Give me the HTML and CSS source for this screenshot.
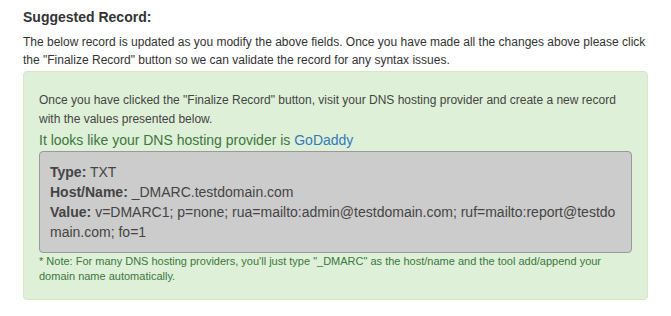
FILE: index.html
```html
<!DOCTYPE html>
<html lang="en">
<head>
    <meta charset="UTF-8">
    <meta name="viewport" content="width=device-width, initial-scale=1.0">
    <title>Suggested Record</title>
    <link rel="stylesheet" href="styles.css">
</head>
<body>
    <div class="record-section">
        <h4 class="record-title">Suggested Record:</h4>
        <p class="record-intro">The below record is updated as you modify the above fields. Once you have made all the changes above please click the "Finalize Record" button so we can validate the record for any syntax issues.</p>

        <!-- Success box -->
        <div class="alert-success">
            <p class="alert-text">Once you have clicked the "Finalize Record" button, visit your DNS hosting provider and create a new record with the values presented below.</p>
            <div class="provider">It looks like your DNS hosting provider is <a href="#" class="provider-link">GoDaddy</a></div>

            <div class="record-box">
                <div><b>Type:</b> TXT</div>
                <div><b>Host/Name:</b> _DMARC.testdomain.com</div>
                <div class="record-value"><b>Value:</b> v=DMARC1; p=none; rua=mailto:admin@testdomain.com; ruf=mailto:report@testdomain.com; fo=1</div>
            </div>

            <div class="note">* Note: For many DNS hosting providers, you'll just type "_DMARC" as the host/name and the tool add/append your domain name automatically.</div>
        </div>
    </div>
</body>
</html>
```

FILE: styles.css
```css
body {
    font-family: "Liberation Sans", Arial, sans-serif;
    margin: 0;
    padding: 0;
    background-color: #fff;
    color: #333;
}
.record-section {
    padding: 7px 23px 0 23px;
    width: 625px;
}
.record-title {
    font-size: 14px;
    font-weight: bold;
    line-height: 20px;
    margin: 0 0 6px 0;
    color: #333;
}
.record-intro {
    font-size: 12px;
    line-height: 18px;
    margin: 0 0 2px 0;
}
/* Green box */
.alert-success {
    background-color: #dff0d8;
    border: 1px solid #d6e9c6;
    border-radius: 4px;
    padding: 19px 15px 15px 15px;
}
.alert-text {
    font-size: 12px;
    line-height: 19px;
    margin: 0 0 1px 0;
    color: #444;
}
.provider {
    font-size: 14px;
    line-height: 20px;
    color: #3c763d;
    margin-bottom: 1px;
}
.provider-link {
    color: #337ab7;
    text-decoration: none;
}
/* Gray record box */
.record-box {
    background-color: #ccc;
    border: 1px solid #999;
    border-radius: 4px;
    padding: 10px;
    font-size: 14px;
    line-height: 20px;
    color: #444;
}
.record-value {
    word-break: break-all;
}
.note {
    font-size: 11px;
    line-height: 15px;
    color: #3c763d;
    margin-top: 1px;
}
```
